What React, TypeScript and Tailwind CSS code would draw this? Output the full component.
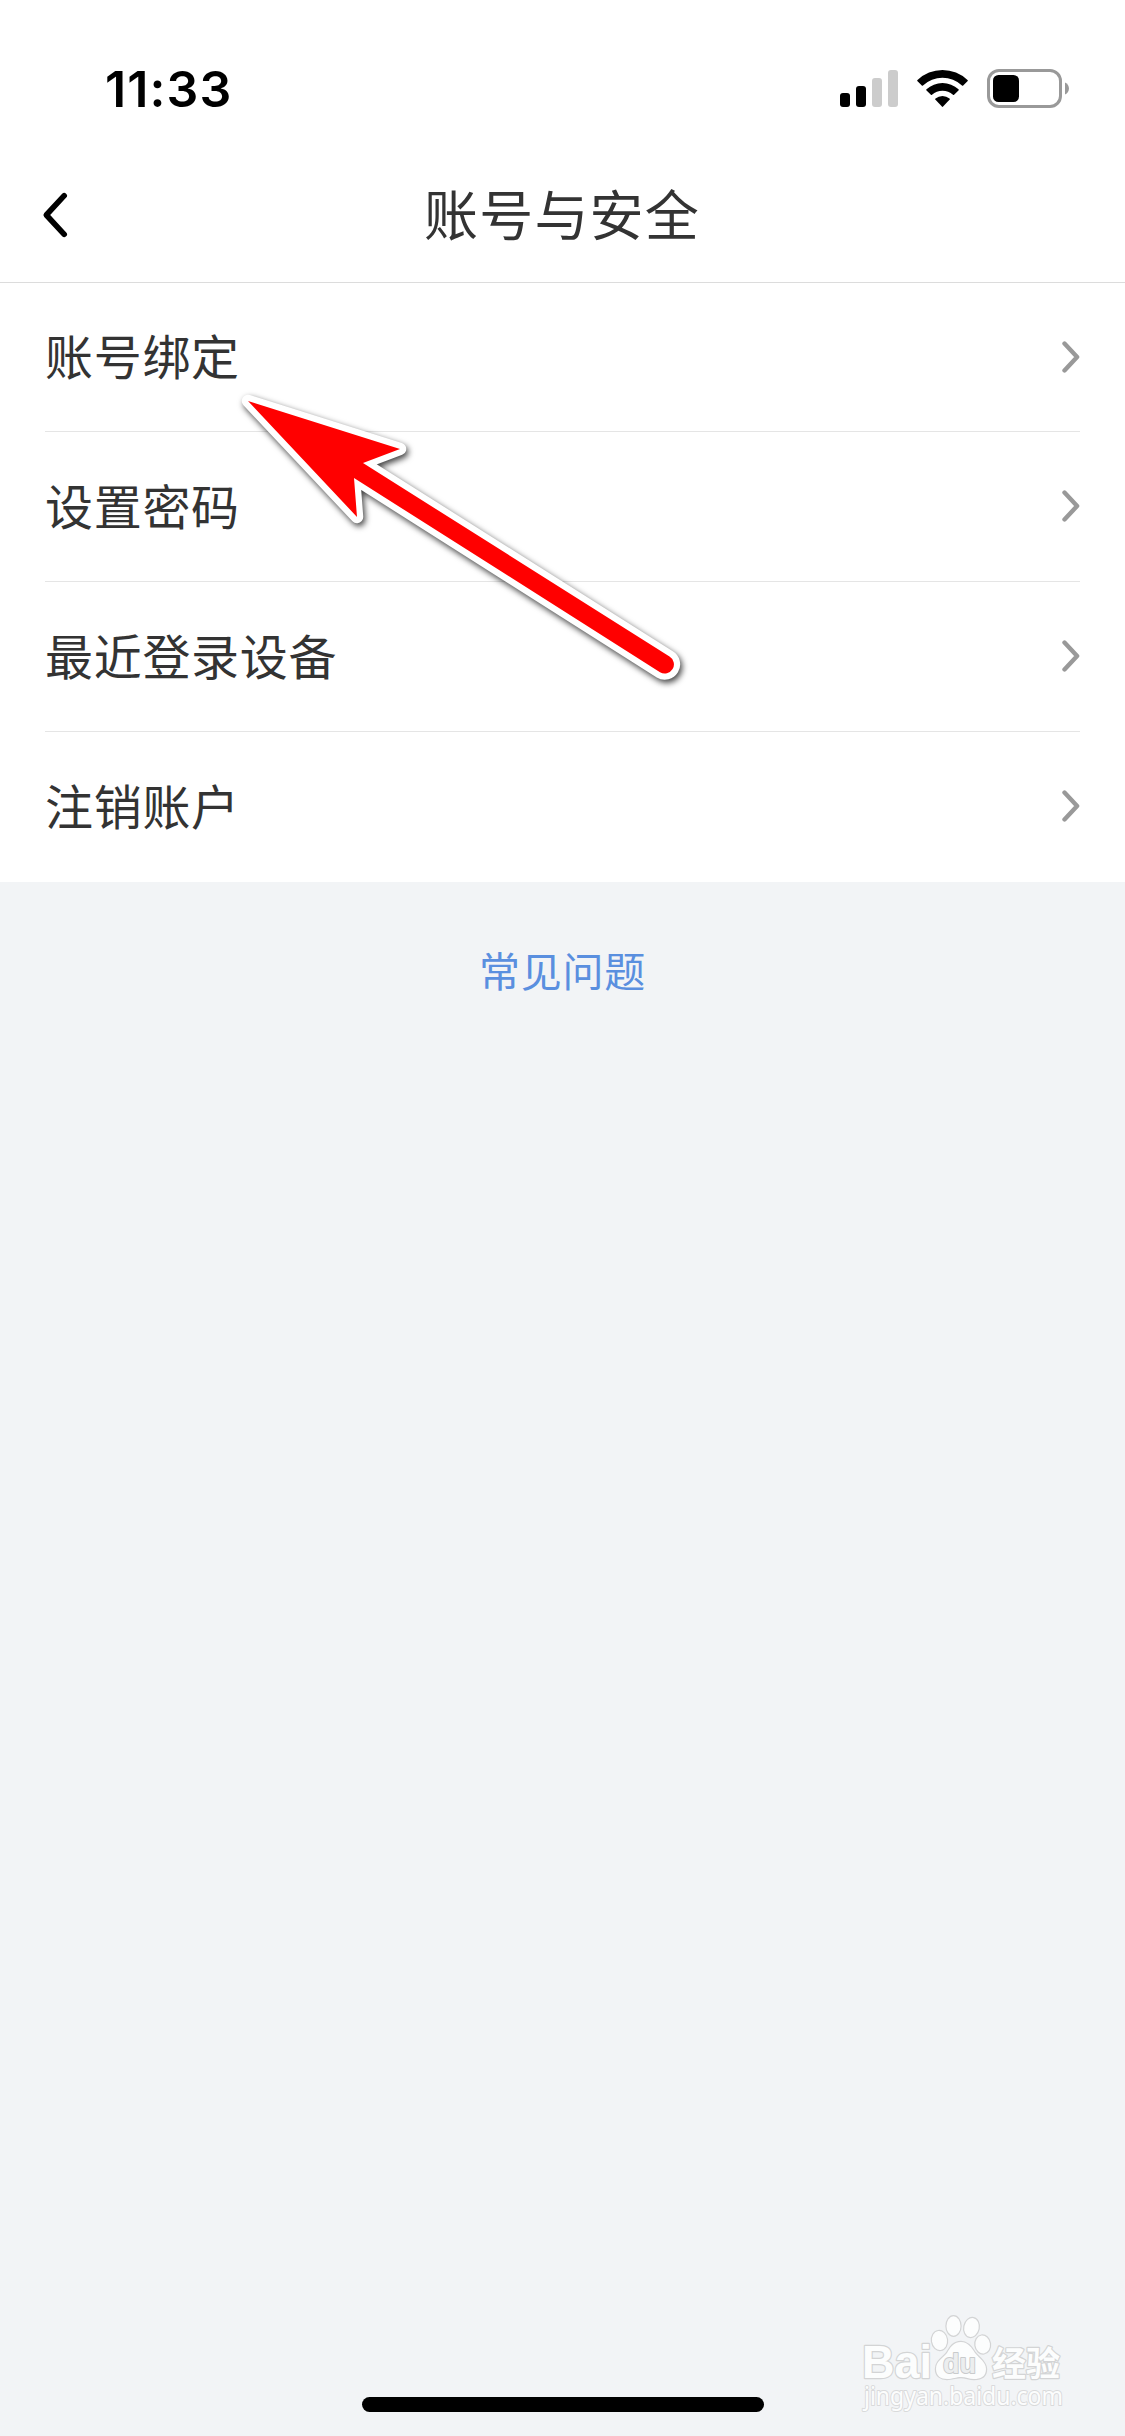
const items = ["账号绑定", "设置密码", "最近登录设备", "注销账户"];

function StatusBar() {
  return (
    <div className="flex h-[150px] items-start justify-between pl-[105px] pr-[55px] pt-[59px]">
      <span className="font-['Inter',sans-serif] text-[50px] font-semibold leading-[60px] tracking-[1.1px] text-black">
        11:33
      </span>
      <div className="flex items-start pt-[10px]">
        <svg width="58" height="38" viewBox="0 0 58 38" className="mr-[19px] mt-px">
          <rect x="0" y="23" width="10" height="14" rx="3" fill="#000" />
          <rect x="16" y="16" width="10" height="21" rx="3" fill="#000" />
          <rect x="32" y="8" width="10" height="29" rx="3" fill="#ccc" />
          <rect x="48" y="0" width="10" height="37" rx="3" fill="#ccc" />
        </svg>
        <svg width="51" height="38" viewBox="0 0 51 38" className="mr-[19px] mt-px">
          <path d="M0.3 11 Q0 10.6 0.5 10.1 A36 36 0 0 1 50.5 10.1 Q51 10.6 50.7 11 L46.2 15.6 Q45.6 16 45 15.5 A28.5 28.5 0 0 0 6 15.5 Q5.4 16 4.8 15.6 Z" />
          <path d="M9.3 20.2 Q9 19.8 9.5 19.3 A23.5 23.5 0 0 1 41.5 19.3 Q42 19.8 41.7 20.2 L37.1 24.8 Q36.5 25.2 36 24.7 A16 16 0 0 0 15 24.7 Q14.5 25.2 13.9 24.8 Z" />
          <path d="M18.3 29.4 Q18 29 18.5 28.5 A11 11 0 0 1 32.5 28.5 Q33 29 32.7 29.4 L26.1 36.6 Q25.5 37.2 24.9 36.6 Z" />
        </svg>
        <svg width="83" height="39" viewBox="0 0 83 39">
          <rect x="1.5" y="1.5" width="72" height="36" rx="10.5" fill="none" stroke="#999" strokeWidth="3" />
          <rect x="6" y="6" width="26" height="27" rx="5.5" fill="#000" />
          <path d="M78 13.5 C83.3 15.8 83.3 23 78 25.5 Z" fill="#999" />
        </svg>
      </div>
    </div>
  );
}

function Header() {
  return (
    <header className="flex h-[133px] items-start border-b border-[#dcdcdc] pt-[23px]">
      <svg width="60" height="80" viewBox="0 0 60 80" className="ml-[29px] mt-[2px]">
        <path
          d="M35.2 20.7 L17.3 40 L35.2 59.3"
          fill="none"
          stroke="#000"
          strokeWidth="5.6"
          strokeLinecap="round"
          strokeLinejoin="round"
        />
      </svg>
      <h1 className="flex-1 pr-[90px] text-center text-[54px] font-normal leading-[80px] tracking-[1.2px] text-[#333]">
        账号与安全
      </h1>
    </header>
  );
}

function Row({ label }: { label: string }) {
  return (
    <li className="flex h-[150px] items-center justify-between border-b border-[#e5e5e5] pb-px first:h-[149px] last:border-b-0 last:pb-[2px]">
      <span className="pb-[5px] text-[48px] leading-[72px] tracking-[0.7px] text-[#333]">{label}</span>
      <svg width="18" height="32" viewBox="0 0 18 32">
        <path
          d="M2.5 2.6 L15.1 16 L2.5 29.4"
          fill="none"
          stroke="#999"
          strokeWidth="4.4"
          strokeLinecap="round"
          strokeLinejoin="round"
        />
      </svg>
    </li>
  );
}

function Arrow() {
  return (
    <svg
      className="pointer-events-none absolute left-[230px] top-[380px] drop-shadow-[2px_3px_3px_rgba(0,0,0,0.75)]"
      width="470"
      height="320"
      viewBox="230 380 470 320"
    >
      <path
        d="M248 401 L400 449 L363 463 L669.5 656.5 A9 9 0 0 1 660 672.2 L354 478 L357 517 Z"
        fill="#fff"
        stroke="#fff"
        strokeWidth="12.5"
        strokeLinejoin="round"
      />
      <path d="M248 401 L400 449 L363 463 L669.5 656.5 A9 9 0 0 1 660 672.2 L354 478 L357 517 Z" fill="#f00" />
    </svg>
  );
}

function Watermark() {
  return (
    <svg
      className="absolute bottom-0 right-0"
      width="285"
      height="146"
      viewBox="0 0 285 146"
      fill="#fcfdfd"
      stroke="#d3d4d5"
      strokeWidth="2.4"
      paintOrder="stroke"
      strokeLinejoin="round"
    >
      <text x="22" y="88" fontSize="46" fontWeight="700" textLength="70" lengthAdjust="spacingAndGlyphs" fontFamily="Liberation Sans, sans-serif">
        Bai
      </text>
      <ellipse cx="99.5" cy="50.5" rx="7.5" ry="9.5" transform="rotate(-8 99.5 50.5)" />
      <ellipse cx="113.5" cy="36" rx="7" ry="9.7" />
      <ellipse cx="131.5" cy="37.5" rx="7.2" ry="9.5" transform="rotate(12 131.5 37.5)" />
      <ellipse cx="142.7" cy="54.5" rx="7.3" ry="9" transform="rotate(-8 142.7 54.5)" />
      <path d="M121 52 C128 52 132 58 135 63 C139 68 146 72 146 79 C146 87 140 89 134 89 C129 89 126 87 121 87 C116 87 113 89 107 89 C101 89 96 86 96 79 C96 71 103 68 107 63 C110 58 113 52 121 52 Z" />
      <text x="103" y="83" fontSize="28" fontWeight="700" fill="#eceeef" stroke="#c9cbcc" strokeWidth="2" textLength="33" lengthAdjust="spacingAndGlyphs" fontFamily="Liberation Sans, sans-serif">
        du
      </text>
      <text x="152" y="86" fontSize="34" fontWeight="700" fontFamily="Noto Sans CJK SC, sans-serif">
        经验
      </text>
      <text x="24" y="115" fontSize="25" strokeWidth="2" stroke="#d9dadb" textLength="199" lengthAdjust="spacingAndGlyphs" fontFamily="Noto Sans, sans-serif">
        jingyan.baidu.com
      </text>
    </svg>
  );
}

export default function App() {
  return (
    <main className="relative flex h-[2436px] w-[1125px] flex-col overflow-hidden bg-[#f2f4f6] font-['Noto_Sans_CJK_SC',sans-serif]">
      <div className="bg-white">
        <StatusBar />
        <Header />
        <ul className="px-[45px]">
          {items.map((item) => (
            <Row key={item} label={item} />
          ))}
        </ul>
      </div>
      <a className="mt-[57px] self-center text-[41px] leading-[60px] tracking-[0.8px] text-[#5a8fdf]">常见问题</a>
      <div className="mb-[24px] mt-auto h-[15px] w-[402px] self-center rounded-full bg-black" />
      <Arrow />
      <Watermark />
    </main>
  );
}
